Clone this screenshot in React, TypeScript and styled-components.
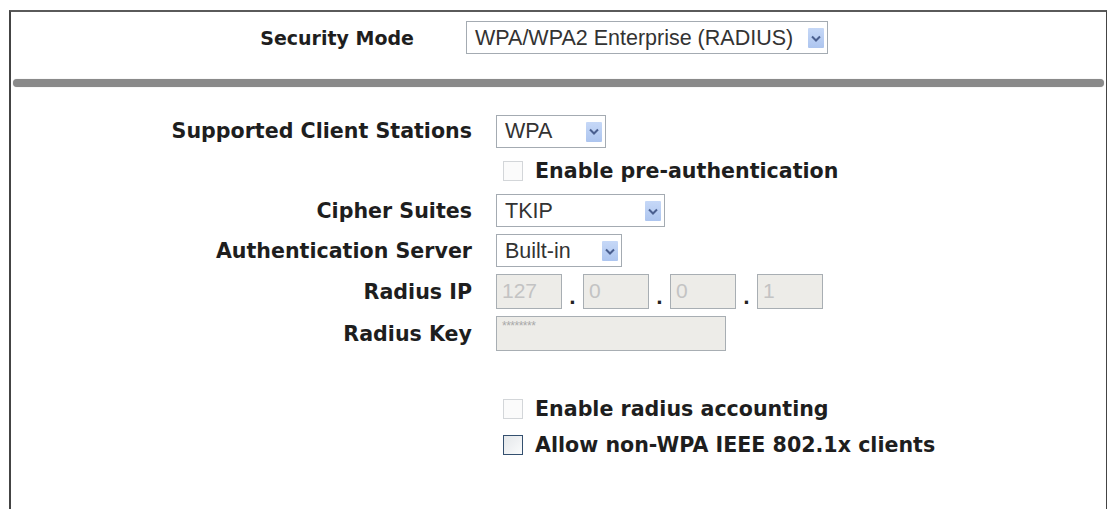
import React from "react";
import styled, { createGlobalStyle } from "styled-components";

const GlobalStyle = createGlobalStyle`
  body {
    margin: 0;
    background: #ffffff;
    font-family: "DejaVu Sans", Verdana, sans-serif;
  }
`;

const Page = styled.div`
  padding: 10px 5px 0 9px;
  height: 509px;
  box-sizing: border-box;
  overflow: hidden;
`;

const Frame = styled.div`
  border-top: 2px solid #5a5a5a;
  border-left: 2px solid #444;
  border-right: 1px solid #444;
  min-height: 520px;
  box-sizing: border-box;
`;

const TopRow = styled.div`
  display: grid;
  grid-template-columns: 403px auto;
  column-gap: 52px;
  align-items: center;
  align-content: start;
  height: 67px;
  padding-top: 9px;
  box-sizing: border-box;
`;

const Divider = styled.div`
  height: 8px;
  margin: 0 2px;
  border-radius: 4px;
  background: #8a8a8a;
  box-shadow: 0 0 1px #b5b5b5;
`;

const FormBody = styled.div`
  display: flex;
  flex-direction: column;
  gap: 7px;
  padding-top: 27px;
`;

const Row = styled.div<{ $h: number }>`
  display: grid;
  grid-template-columns: 461px auto;
  column-gap: 24px;
  align-items: center;
  height: ${(p) => p.$h}px;
`;

const Label = styled.div<{ $size?: number }>`
  text-align: right;
  font-weight: bold;
  font-size: ${(p) => p.$size ?? 20.6}px;
  color: #1e1e1e;
  white-space: nowrap;
`;

const SelectBox = styled.div<{ $w: number; $h?: number }>`
  display: flex;
  align-items: center;
  justify-content: space-between;
  width: ${(p) => p.$w}px;
  height: ${(p) => p.$h ?? 33}px;
  box-sizing: border-box;
  border: 1px solid #a4abb2;
  background: #fff;
  padding: 1px 3px 0 8px;
  font-family: "Liberation Sans", Arial, sans-serif;
  font-size: 21.5px;
  color: #333;
  white-space: nowrap;
`;

const ArrowButton = styled.span`
  display: flex;
  align-items: center;
  justify-content: center;
  width: 16px;
  height: 20px;
  background: linear-gradient(#c6d8f7, #adc5ef);
  border-radius: 1px;
`;

const IpGroup = styled.div`
  display: flex;
  align-items: center;
`;

const Field = styled.div<{ $w: number }>`
  width: ${(p) => p.$w}px;
  height: 35px;
  box-sizing: border-box;
  border: 1px solid #a8aeb3;
  background: #edece8;
  padding: 3px 5px;
  font-family: "Liberation Sans", Arial, sans-serif;
  font-size: 21px;
  color: #c3c3c3;
  line-height: 26px;
`;

const Masked = styled.div`
  font-size: 12px;
  line-height: 12px;
  letter-spacing: -0.5px;
  color: #a9a9a9;
`;

const Dot = styled.span`
  width: 21px;
  text-align: center;
  padding-top: 12px;
  font-family: "DejaVu Sans", sans-serif;
  font-weight: bold;
  font-size: 18px;
  color: #222;
`;

const CheckLine = styled.div`
  display: flex;
  align-items: center;
  gap: 12px;
  padding-left: 7px;
`;

const Box = styled.span<{ $enabled?: boolean }>`
  width: 20px;
  height: 20px;
  box-sizing: border-box;
  border: 1px solid ${(p) => (p.$enabled ? "#34506f" : "#d3d6d9")};
  background: ${(p) =>
    p.$enabled ? "linear-gradient(135deg, #e4e7ea, #fafbfc)" : "#fbfbfb"};
  flex: none;
`;

const CheckText = styled.span`
  font-weight: bold;
  font-size: 20.6px;
  color: #1e1e1e;
  white-space: nowrap;
`;

const Spacer = styled.div`
  height: 30px;
`;

function Chevron() {
  return (
    <svg width="10" height="7" viewBox="0 0 10 7">
      <path d="M1 1.5 L5 5.5 L9 1.5" fill="none" stroke="#4a5f8f" strokeWidth="2" />
    </svg>
  );
}

function Select({ value, width }: { value: string; width: number }) {
  return (
    <SelectBox $w={width}>
      <span>{value}</span>
      <ArrowButton>
        <Chevron />
      </ArrowButton>
    </SelectBox>
  );
}

function Check({ text, enabled }: { text: string; enabled?: boolean }) {
  return (
    <CheckLine>
      <Box $enabled={enabled} />
      <CheckText>{text}</CheckText>
    </CheckLine>
  );
}

export default function App() {
  return (
    <>
      <GlobalStyle />
      <Page>
        <Frame>
          <TopRow>
            <Label $size={19}>Security Mode</Label>
            <Select value="WPA/WPA2 Enterprise (RADIUS)" width={362} />
          </TopRow>
          <Divider />
          <FormBody>
            <Row $h={34}>
              <Label>Supported Client Stations</Label>
              <Select value="WPA" width={110} />
            </Row>
            <Row $h={32}>
              <span />
              <Check text="Enable pre-authentication" />
            </Row>
            <Row $h={33}>
              <Label>Cipher Suites</Label>
              <Select value="TKIP" width={169} />
            </Row>
            <Row $h={33}>
              <Label>Authentication Server</Label>
              <Select value="Built-in" width={126} />
            </Row>
            <Row $h={35}>
              <Label>Radius IP</Label>
              <IpGroup>
                <Field $w={66}>127</Field>
                <Dot>.</Dot>
                <Field $w={66}>0</Field>
                <Dot>.</Dot>
                <Field $w={66}>0</Field>
                <Dot>.</Dot>
                <Field $w={66}>1</Field>
              </IpGroup>
            </Row>
            <Row $h={35}>
              <Label>Radius Key</Label>
              <Field $w={230}>
                <Masked>********</Masked>
              </Field>
            </Row>
            <Spacer />
            <Row $h={28}>
              <span />
              <Check text="Enable radius accounting" />
            </Row>
            <Row $h={30}>
              <span />
              <Check text="Allow non-WPA IEEE 802.1x clients" enabled />
            </Row>
          </FormBody>
        </Frame>
      </Page>
    </>
  );
}
